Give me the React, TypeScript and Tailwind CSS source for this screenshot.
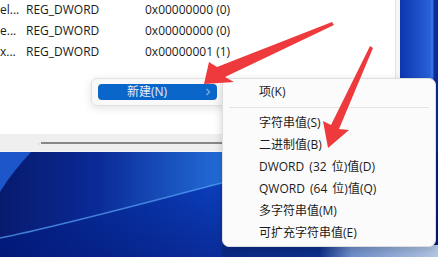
import React from "react";

const rows = [
  { n: "el...", t: "REG_DWORD", v: "0x00000000 (0)" },
  { n: "e...", t: "REG_DWORD", v: "0x00000000 (0)" },
  { n: "x...", t: "REG_DWORD", v: "0x00000001 (1)" },
];

const sub = [
  "字符串值(S)",
  "二进制值(B)",
  "DWORD (32 位)值(D)",
  "QWORD (64 位)值(Q)",
  "多字符串值(M)",
  "可扩充字符串值(E)",
];

function Wallpaper() {
  return (
    <svg className="absolute inset-0" width="438" height="257" viewBox="0 0 438 257">
      <defs>
        <linearGradient id="band" x1="0" y1="0" x2="1" y2="0">
          <stop offset="0" stopColor="#071a6e" />
          <stop offset="0.22" stopColor="#0a2a96" />
          <stop offset="0.55" stopColor="#2676e2" />
          <stop offset="1" stopColor="#145cd0" />
        </linearGradient>
        <linearGradient id="low" x1="0" y1="0" x2="0" y2="1">
          <stop offset="0" stopColor="#0a48cc" />
          <stop offset="1" stopColor="#0a2c9a" />
        </linearGradient>
        <linearGradient id="lowh" x1="0" y1="0" x2="1" y2="0">
          <stop offset="0" stopColor="#001470" stopOpacity="0.8" />
          <stop offset="0.5" stopColor="#001470" stopOpacity="0" />
          <stop offset="1" stopColor="#000a50" stopOpacity="0.6" />
        </linearGradient>
        <linearGradient id="right" x1="0" y1="0" x2="1" y2="0">
          <stop offset="0" stopColor="#0c36b0" />
          <stop offset="0.8" stopColor="#2a62d8" />
          <stop offset="0.85" stopColor="#3c78e6" />
          <stop offset="0.9" stopColor="#0b2f9e" />
          <stop offset="1" stopColor="#08288e" />
        </linearGradient>
        <linearGradient id="bot" x1="0" y1="0" x2="1" y2="0">
          <stop offset="0" stopColor="#0a2a86" />
          <stop offset="0.45" stopColor="#0c2f8a" />
          <stop offset="0.6" stopColor="#6f8fca" />
          <stop offset="1" stopColor="#b4c8e6" />
        </linearGradient>
      </defs>
      <rect x="0" y="0" width="438" height="257" fill="#0d3fb8" />
      <rect x="400" y="0" width="38" height="257" fill="url(#right)" />
      <rect x="0" y="150" width="438" height="107" fill="url(#band)" />
      <path d="M0,151 L32,151 C20,164 9,177 0,192 Z" fill="#1c56c8" />
      <path d="M0,238 C60,226 140,204 222,183 L438,150 L438,257 L0,257 Z" fill="url(#low)" />
      <path d="M0,238 C60,226 140,204 222,183 L438,150 L438,257 L0,257 Z" fill="url(#lowh)" />
      <path d="M0,238 C60,226 140,204 222,183 L300,172" fill="none" stroke="#58a4f6" strokeWidth="1.5" opacity="0.7" />
      <rect x="222" y="245" width="216" height="12" fill="url(#bot)" />
    </svg>
  );
}

function Arrows() {
  return (
    <svg className="absolute inset-0 pointer-events-none" width="438" height="257" viewBox="0 0 438 257">
      <polygon
        points="204,84 209,62 217,67 332,22 334,25 225,77 234,82"
        fill="#ee3a3c"
      />
      <polygon
        points="328,148 323,121 331,125 370,46 373,48 339,129 349,130"
        fill="#ee3a3c"
      />
    </svg>
  );
}

export default function App() {
  const font = { fontFamily: '"Open Sans", "Noto Sans CJK SC", sans-serif' };
  return (
    <div className="relative w-[438px] h-[257px] overflow-hidden" style={font}>
      <Wallpaper />
      <div className="relative flex w-[400px] h-[152px] bg-white border-b border-[#f4f4f4]">
        <div className="flex flex-col flex-1">
          <div className="flex flex-col -mt-px flex-1 text-[12px] text-[#1a1a1a]">
            {rows.map((r) => (
              <div key={r.v + r.n} className="flex h-[21px] items-center">
                <div className="w-[26px] overflow-hidden whitespace-nowrap">{r.n}</div>
                <div className="w-[119px] whitespace-nowrap">{r.t}</div>
                <div className="whitespace-nowrap">{r.v}</div>
              </div>
            ))}
          </div>
          <div className="flex items-center h-[17px] bg-[#efefef]">
            <div className="w-[41px] flex justify-end pr-[1px] text-[8px] text-[#c8c8c8] leading-none">‹</div>
            <div className="flex-1 h-[2px] bg-[#878787]" />
          </div>
        </div>
        <div className="w-[5px] bg-[#f6f6f6] border-l border-[#e4e4e4]" />
      </div>

      {/* first context menu */}
      <div className="absolute left-[91px] top-[78px] w-[140px] h-[28px] rounded-[6px] bg-[#f9f9f9] border border-[#e2e2e2] shadow-[0_2px_8px_rgba(0,0,0,0.12)] flex items-center pl-[6px]">
        <div className="flex items-center w-[119px] h-[16px] rounded-[4px] bg-[#0a67c9] text-[12px] text-[#e6eefa]">
          <span className="ml-[29px] flex-1 leading-none">新建(N)</span>
          <svg width="6" height="8" viewBox="0 0 6 8" className="mr-[6px]">
            <path d="M1.5,1 L4.5,4 L1.5,7" stroke="#7fb0e6" strokeWidth="1.2" fill="none" />
          </svg>
        </div>
      </div>

      {/* submenu */}
      <div className="absolute left-[222px] top-[78px] w-[214px] h-[169px] rounded-[7px] bg-[#fbfbfb] border border-[#dedede] shadow-[0_3px_10px_rgba(0,0,0,0.18)] flex flex-col py-[2px] text-[12px] text-[#1b1b1b] [word-spacing:2px]">
        <div className="h-[22px] flex items-center pl-[36px]">项(K)</div>
        <div className="h-[9px] flex items-center px-[6px]">
          <div className="h-px w-full bg-[#e3e3e3]" />
        </div>
        {sub.map((s) => (
          <div key={s} className="h-[22px] flex items-center pl-[36px] whitespace-nowrap">
            {s}
          </div>
        ))}
      </div>

      <Arrows />
    </div>
  );
}
